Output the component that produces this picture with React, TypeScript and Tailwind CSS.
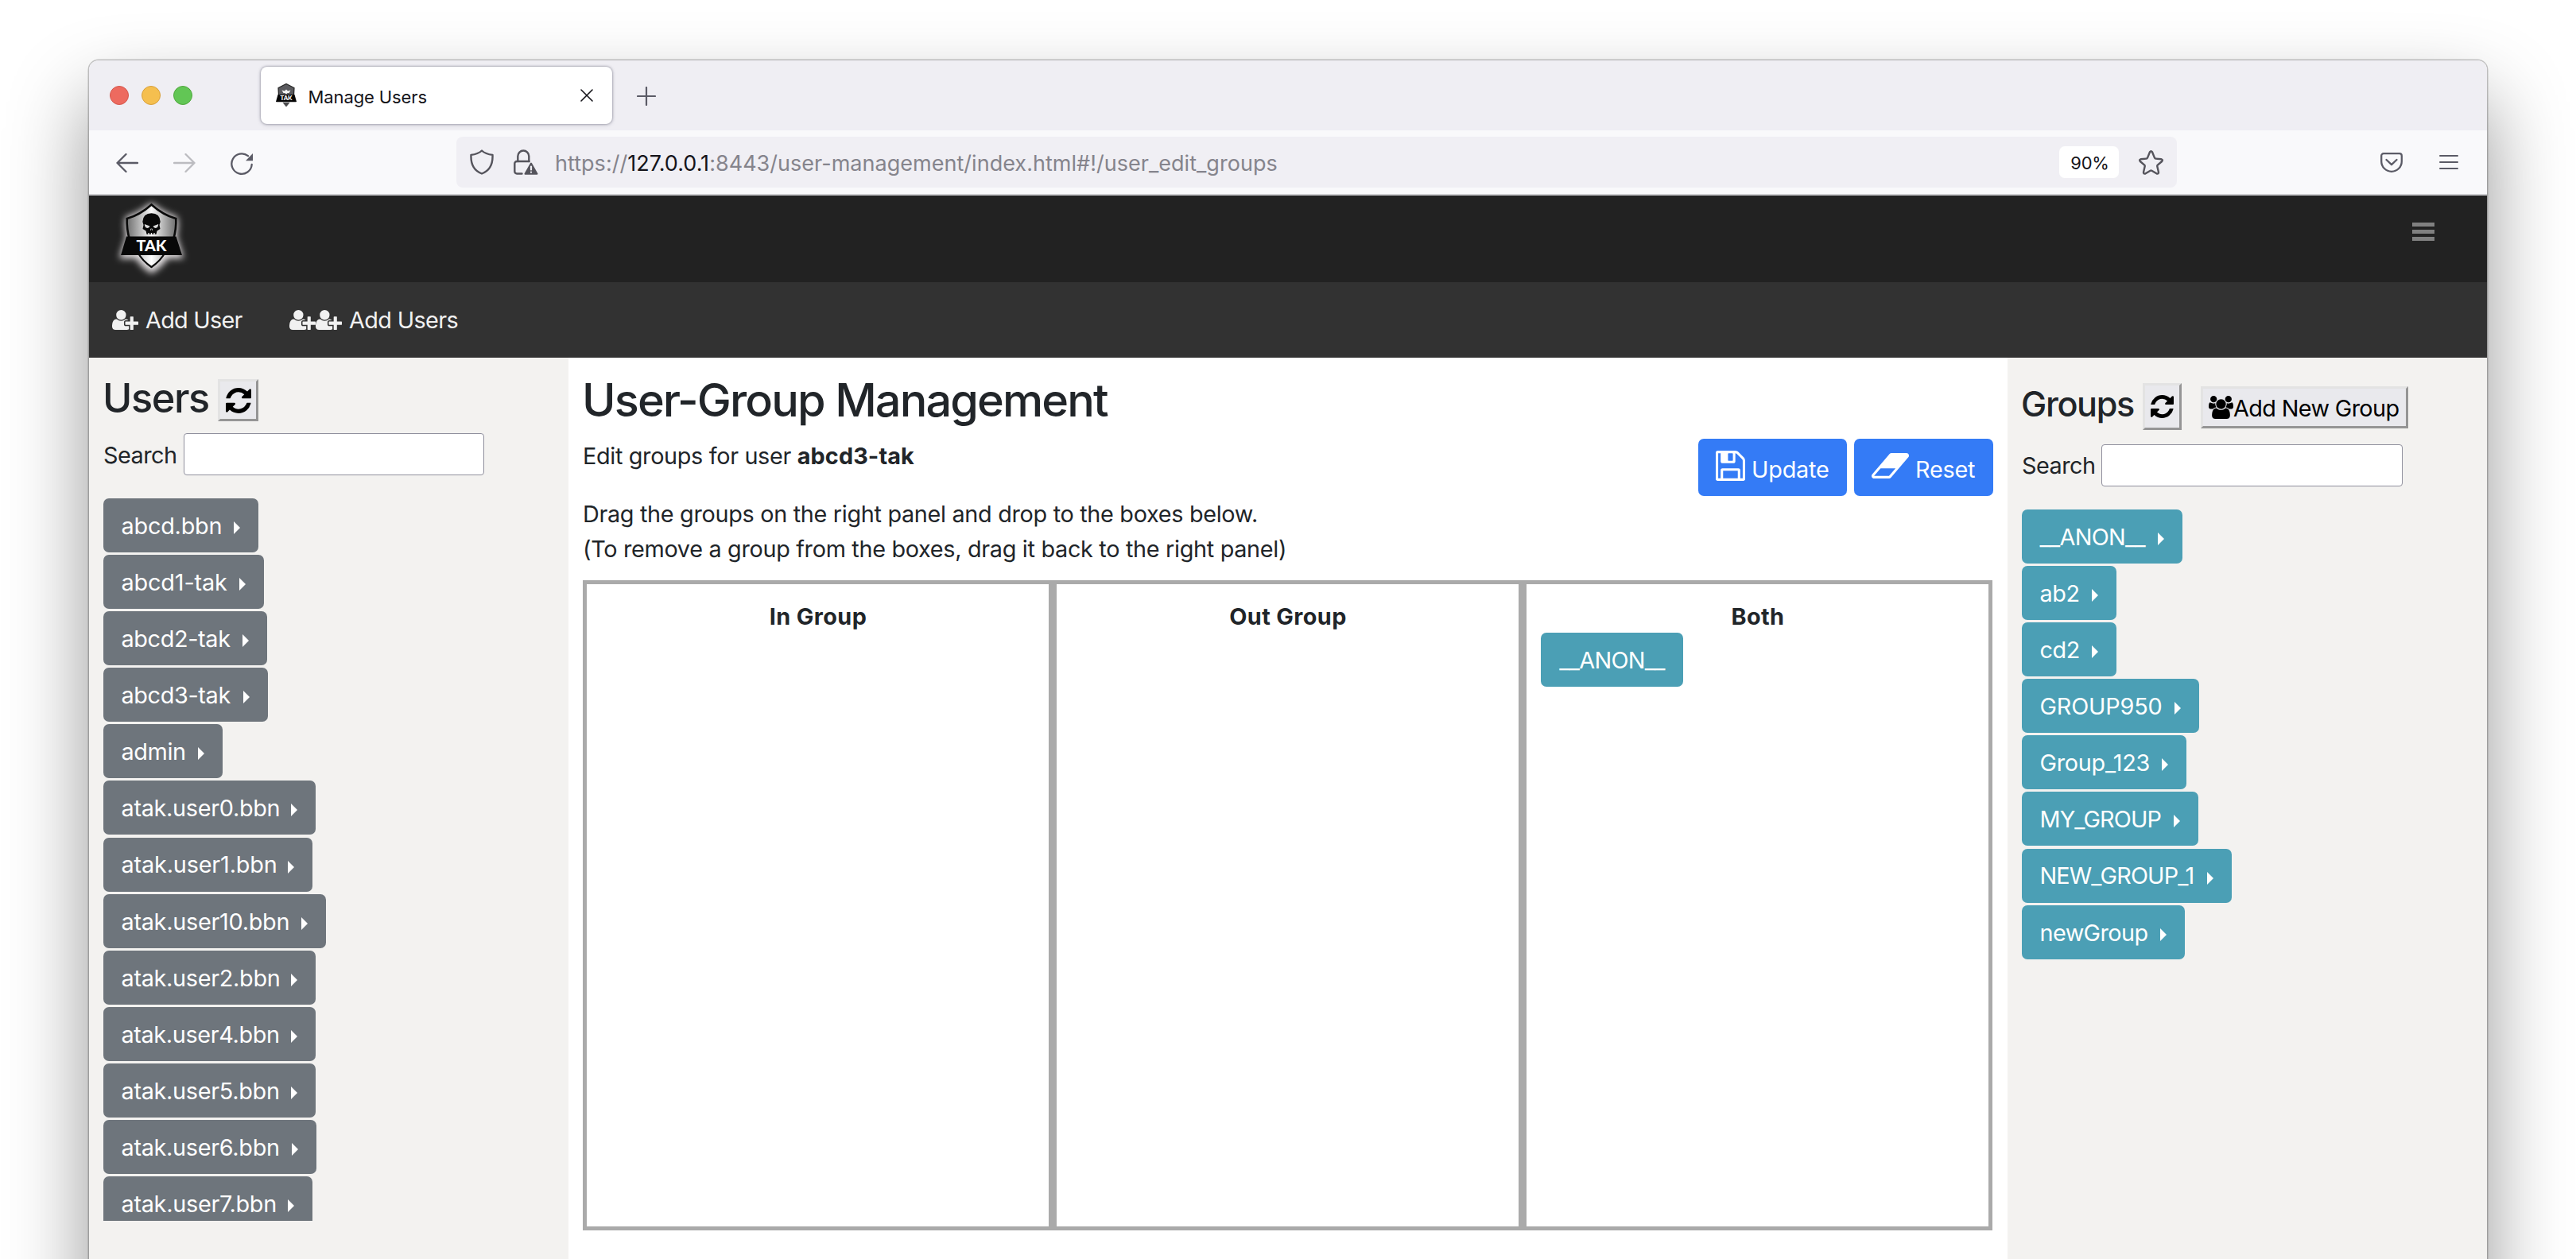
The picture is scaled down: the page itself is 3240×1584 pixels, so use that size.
import React from "react";

type Item = { name: string; box: string };

const users: Item[] = [
  { name: "abcd.bbn", box: "w-[195px] tracking-[-0.007em]" },
  { name: "abcd1-tak", box: "w-[202px] tracking-[-0.005em]" },
  { name: "abcd2-tak", box: "w-[206px] tracking-[-0.012em]" },
  { name: "abcd3-tak", box: "w-[207px] tracking-[-0.012em]" },
  { name: "admin", box: "w-[150px] tracking-[-0.012em]" },
  { name: "atak.user0.bbn", box: "w-[267px] tracking-[-0.01em]" },
  { name: "atak.user1.bbn", box: "w-[263px] tracking-[-0.005em]" },
  { name: "atak.user10.bbn", box: "w-[280px] tracking-[-0.009em]" },
  { name: "atak.user2.bbn", box: "w-[267px] tracking-[-0.01em]" },
  { name: "atak.user4.bbn", box: "w-[267px] tracking-[-0.012em]" },
  { name: "atak.user5.bbn", box: "w-[267px] tracking-[-0.01em]" },
  { name: "atak.user6.bbn", box: "w-[268px] tracking-[-0.01em]" },
  { name: "atak.user7.bbn", box: "w-[263px] tracking-[-0.009em]" },
];

const groups: Item[] = [
  { name: "__ANON__", box: "w-[202px] tracking-[-0.023em]" },
  { name: "ab2", box: "w-[119px] tracking-[-0.014em]" },
  { name: "cd2", box: "w-[119px] tracking-[-0.014em]" },
  { name: "GROUP950", box: "w-[223px] tracking-[-0.006em]" },
  { name: "Group_123", box: "w-[207px] tracking-[-0.009em]" },
  { name: "MY_GROUP", box: "w-[222px] tracking-[-0.03em]" },
  { name: "NEW_GROUP_1", box: "w-[264px] tracking-[-0.029em]" },
  { name: "newGroup", box: "w-[205px] tracking-[-0.02em]" },
];

function Glyph({ box, d, className }: { box: string; d: string; className: string }) {
  return (
    <svg viewBox={box} className={`shrink-0 ${className}`} fill="currentColor" preserveAspectRatio="none">
      <path d={d} />
    </svg>
  );
}

const Refresh = ({ className }: { className: string }) => (
  <Glyph
    box="128 128 1536 1536"
    className={className}
    d="M1639 1056q0 5-1 7-64 268-268 434.5t-478 166.5q-146 0-282.5-55t-243.5-157l-129 129q-19 19-45 19t-45-19-19-45v-448q0-26 19-45t45-19h448q26 0 45 19t19 45-19 45l-137 137q71 66 161 102t187 36q134 0 250-65t186-179q11-17 53-117 8-23 30-23h192q13 0 22.5 9.5t9.5 22.5zm25-800v448q0 26-19 45t-45 19h-448q-26 0-45-19t-19-45 19-45l138-138q-148-137-349-137-134 0-250 65t-186 179q-11 17-53 117-8 23-30 23h-199q-13 0-22.5-9.5t-9.5-22.5v-7q65-268 270-434.5t480-166.5q146 0 284 55.5t245 156.5l130-129q19-19 45-19t45 19 19 45z"
  />
);

const UserPlus = () => (
  <Glyph
    box="0 128 2048 1536"
    className="h-[25px] w-[33px]"
    d="M704 896q-159 0-271.5-112.5t-112.5-271.5 112.5-271.5 271.5-112.5 271.5 112.5 112.5 271.5-112.5 271.5-271.5 112.5zm960 128h352q13 0 22.5 9.5t9.5 22.5v192q0 13-9.5 22.5t-22.5 9.5h-352v352q0 13-9.5 22.5t-22.5 9.5h-192q-13 0-22.5-9.5t-9.5-22.5v-352h-352q-13 0-22.5-9.5t-9.5-22.5v-192q0-13 9.5-22.5t22.5-9.5h352v-352q0-13 9.5-22.5t22.5-9.5h192q13 0 22.5 9.5t9.5 22.5v352zm-736 224q0 52 38 90t90 38h256v238q-68 50-171 50h-874q-121 0-194-69t-73-190q0-53 3.5-103.5t14-109 26.5-108.5 43-97.5 62-81 85.5-53.5 111.5-20q19 0 39 17 79 61 154.5 91.5t164.5 30.5 164.5-30.5 154.5-91.5q20-17 39-17 132 0 217 96h-223q-52 0-90 38t-38 90v192z"
  />
);

const UsersGlyph = () => (
  <Glyph
    box="0 0 1920 1792"
    className="h-[29px] w-[31px]"
    d="M593 896q-162 5-265 128h-134q-82 0-138-40.5t-56-118.5q0-353 124-353 6 0 43.5 21t97.5 42.5 119 21.5q67 0 133-23-5 37-5 66 0 139 81 256zm1071 637q0 120-73 189.5t-194 69.5h-874q-121 0-194-69.5t-73-189.5q0-53 3.5-103.5t14-109 26.5-108.5 43-97.5 62-81 85.5-53.5 111.5-20q10 0 43 21.5t73 48 107 48 135 21.5 135-21.5 107-48 73-48 43-21.5q61 0 111.5 20t85.5 53.5 62 81 43 97.5 26.5 108.5 14 109 3.5 103.5zm-1024-1277q0 106-75 181t-181 75-181-75-75-181 75-181 181-75 181 75 75 181zm704 384q0 159-112.5 271.5t-271.5 112.5-271.5-112.5-112.5-271.5 112.5-271.5 271.5-112.5 271.5 112.5 112.5 271.5zm576 225q0 78-56 118.5t-138 40.5h-134q-103-123-265-128 81-117 81-256 0-29-5-66 66 23 133 23 59 0 119-21.5t97.5-42.5 43.5-21q124 0 124 353zm-128-609q0 106-75 181t-181 75-181-75-75-181 75-181 181-75 181 75 75 181z"
  />
);

const Floppy = () => (
  <Glyph
    box="128 128 1536 1536"
    className="h-[38px] w-[37px]"
    d="M512 1536h768v-384h-768v384zm896 0h128v-896q0-14-10-38.5t-20-34.5l-281-281q-10-10-34-20t-39-10v416q0 40-28 68t-68 28h-576q-40 0-68-28t-28-68v-416h-128v1280h128v-416q0-40 28-68t68-28h832q40 0 68 28t28 68v416zm-384-928v-320q0-13-9.5-22.5t-22.5-9.5h-192q-13 0-22.5 9.5t-9.5 22.5v320q0 13 9.5 22.5t22.5 9.5h192q13 0 22.5-9.5t9.5-22.5zm640 32v928q0 40-28 68t-68 28h-1344q-40 0-68-28t-28-68v-1344q0-40 28-68t68-28h928q40 0 88 20t76 48l280 280q28 28 48 76t20 88z"
  />
);

const Eraser = () => (
  <Glyph
    box="0 256 1920 1280"
    className="h-[32px] w-[47px]"
    d="M896 1408l336-384h-768l-336 384h768zm1013-1077q15 34 9.5 71.5t-30.5 65.5l-896 1024q-38 44-96 44h-768q-38 0-69.5-20.5t-47.5-54.5q-15-34-9.5-71.5t30.5-65.5l896-1024q38-44 96-44h768q38 0 69.5 20.5t47.5 54.5z"
  />
);

function Logo() {
  return (
    <svg viewBox="0 6 110 109" className="h-[109px] w-[110px] overflow-hidden">
      <defs>
        <linearGradient id="steel" x1="0" x2="1">
          <stop offset="0" stopColor="#6e6e6e" />
          <stop offset="0.5" stopColor="#f8f8f8" />
          <stop offset="1" stopColor="#6e6e6e" />
        </linearGradient>
        <linearGradient id="tip" x1="0" x2="1">
          <stop offset="0" stopColor="#c4c4c4" />
          <stop offset="0.5" stopColor="#ffffff" />
          <stop offset="1" stopColor="#b8b8b8" />
        </linearGradient>
        <filter id="halo" x="-30%" y="-30%" width="160%" height="160%">
          <feGaussianBlur stdDeviation="4.2" />
        </filter>
      </defs>
      <g filter="url(#halo)" fill="#e8e4e6">
        <path d="M60.5 15 Q76 28 93 33 Q95 46 92 57 L101 85 H81 Q73 97 60.5 104 Q48 97 41 85 H20 L29 57 Q26 46 28 33 Q45 28 60.5 15Z" />
      </g>
      <path d="M60.5 17.5 Q75 30.500 91.300 35 Q92 47 88 62 H33 Q29 47 29.700 35 Q46 30.500 60.500 17.500Z" fill="url(#steel)" stroke="#0a0a0a" strokeWidth="2.600" />
      <path d="M43.500 78 Q49 88 60.500 96 Q72 88 77.500 78Z" fill="url(#tip)" stroke="#0a0a0a" strokeWidth="2.200" />
      <path d="M29 57.500 H91.500 L99 81 H22Z" fill="#080808" />
      <path d="M49.300 39 Q50 28.300 60.500 28.300 Q71 28.300 71.700 39 L70.500 43 L71.500 48 L67.500 50.500 L66.500 54.800 H64.700 V53 H63.300 V54.800 H61.200 V53 H59.800 V54.800 H57.700 V53 H56.300 V54.800 H54.500 L53.500 50.500 L49.500 48 L50.500 43Z" fill="#080808" />
      <path d="M51.800 42 L58.500 44.500 Q57.500 47.500 54.500 46.800 Q52 46 51.800 42Z M69.200 42 L62.500 44.500 Q63.500 47.500 66.500 46.800 Q69 46 69.200 42Z" fill="#d8d8d8" />
      <path d="M59.300 49.800 L60 47.600 M61.700 49.800 L61 47.600" stroke="#e8e8e8" strokeWidth="0.900" />
      <text x="41.500" y="75.800" textLength="38" lengthAdjust="spacingAndGlyphs" fontFamily="Lato, sans-serif" fontWeight="900" fontSize="19.500" fill="#ffffff">
        TAK
      </text>
    </svg>
  );
}

function Favicon() {
  return (
    <svg viewBox="0 0 26 30" className="h-[30px] w-[26px] shrink-0">
      <path d="M13 0.500 L23 5.500 L22.500 15 H3.500 L3 5.500Z" fill="#5a5a5e" stroke="#222" strokeWidth="1.200" />
      <path d="M7.500 8.500 L11 9.500 L13 7.500 L15 9.500 L18.500 8.500 L16.500 12 H14.500 L13 13.500 L11.500 12 H9.500Z" fill="#f4f4f4" />
      <path d="M6 21 H20 L13 29.500Z" fill="#4a4a4c" />
      <path d="M0.500 22.500 H25.500 V24 H0.500Z" fill="#bdbdbd" />
      <path d="M2.500 14 H23.500 L26 23 H0Z" fill="#050505" />
      <text x="5.500" y="21.300" textLength="15" lengthAdjust="spacingAndGlyphs" fontFamily="Lato, sans-serif" fontWeight="900" fontSize="7.500" fill="#ffffff">
        TAK
      </text>
    </svg>
  );
}

function Entry({ item, tone }: { item: Item; tone: string }) {
  return (
    <li className={`mb-[3.1px] flex h-[68px] items-center justify-between rounded-[7px] pr-[23px] pl-[22.5px] text-white ${tone} ${item.box}`}>
      <span className="pt-px whitespace-nowrap">{item.name}</span>
      <svg viewBox="0 0 8 16" className="mt-[6px] h-[16px] w-[8px] shrink-0">
        <path d="M0 0 L8 8 L0 16Z" fill="#fff" />
      </svg>
    </li>
  );
}

const raised =
  "flex shrink-0 items-center border-[3px] border-t-[#e3e3e3] border-r-[#959595] border-b-[#959595] border-l-[#e3e3e3] bg-[#e9e9ed] text-black";

function TabStrip() {
  return (
    <div className="flex h-[88px] items-start rounded-t-[12px] bg-[#efeef3]">
      <div className="mt-[32px] ml-[26px] flex gap-4">
        <span className="size-6 rounded-full border border-[#d5574c] bg-[#ed6a5f]" />
        <span className="size-6 rounded-full border border-[#d8a03c] bg-[#f5bf4f]" />
        <span className="size-6 rounded-full border border-[#50a73d] bg-[#62c655]" />
      </div>
      <div className="mt-2 ml-[86px] flex h-[72px] w-[442px] items-center rounded-[8px] bg-white pr-6 pl-[19px] shadow-[0_0_3px_rgba(90,90,110,0.7),0_1px_5px_rgba(90,90,110,0.25)]">
        <Favicon />
        <span className="ml-[14.500px] pt-[5px] text-[22px] tracking-[-0.005em] text-[#15141a]">Manage Users</span>
        <svg viewBox="0 0 16 16" className="ml-auto size-4" stroke="#15141a" strokeWidth="1.600" strokeLinecap="round">
          <path d="M1 1 L15 15 M15 1 L1 15" />
        </svg>
      </div>
      <svg viewBox="0 0 24 24" className="mt-[33px] ml-[31px] size-6" stroke="#5b5b66" strokeWidth="2.200" strokeLinecap="round">
        <path d="M12 1 V23 M1 12 H23" />
      </svg>
    </div>
  );
}

function AddressBar() {
  return (
    <div className="flex h-[82px] items-center border-b-2 border-[#cccccf] bg-[#f9f9fb] text-[#5b5b66]">
      <svg viewBox="0 0 28 24" className="mt-[2px] ml-[34px] h-6 w-7" fill="none" stroke="currentColor" strokeWidth="2.300" strokeLinecap="round" strokeLinejoin="round">
        <path d="M1.500 12 H27 M12.500 1 L1.500 12 L12.500 23" />
      </svg>
      <svg viewBox="0 0 28 24" className="mt-[2px] ml-[44px] h-6 w-7" fill="none" stroke="#bcbcc0" strokeWidth="2.300" strokeLinecap="round" strokeLinejoin="round">
        <path d="M1 12 H26.500 M15.500 1 L26.500 12 L15.500 23" />
      </svg>
      <svg viewBox="0 0 28 28" className="mt-[3px] ml-[44px] size-7" fill="none" stroke="currentColor" strokeWidth="2.300" strokeLinecap="round">
        <path d="M26.700 15 A12.700 12.700 0 1 1 22 4.200" />
        <path d="M28 1 V10.300 H19Z" fill="currentColor" stroke="none" />
      </svg>
      <div className="ml-[256px] flex h-16 w-[2164px] items-center rounded-[8px] bg-[#f0eff4]">
        <svg viewBox="0 0 30 32" className="ml-[17px] h-8 w-[30px]" fill="none" stroke="#55545c" strokeWidth="2.400" strokeLinejoin="round">
          <path d="M15 1.500 C18.500 4.800 23 6.300 28.500 6.900 C29 17 25.500 26.500 15 30.500 C4.500 26.500 1 17 1.500 6.900 C7 6.300 11.500 4.800 15 1.500Z" />
        </svg>
        <svg viewBox="0 0 31 32" className="ml-[25px] h-8 w-[31px]" fill="none" stroke="#55545c" strokeWidth="2.400" strokeLinecap="round">
          <path d="M5.300 15 V8.500 A7 7 0 0 1 19.300 8.500 V15" />
          <path d="M10.500 30.500 H4 A2.700 2.700 0 0 1 1.300 27.800 V17.700 A2.700 2.700 0 0 1 4 15 H19.500" />
          <path d="M22 17.500 L29.500 30.700 H14.500Z" fill="#55545c" strokeWidth="2" strokeLinejoin="round" />
          <path d="M22 21.500 V25.500 M22 28.600 V28.700" stroke="#f0eff4" strokeWidth="2.200" />
        </svg>
        <span className="ml-[21px] pt-[3px] text-[27px] tracking-[0.001em] whitespace-nowrap text-[#85848c]">
          https://<span className="text-[#15141a]">127.0.0.1</span>:8443/user-management/index.html#!/user_edit_groups
        </span>
        <span className="mr-[25px] ml-auto flex h-10 w-[75px] items-center justify-center rounded-[7px] bg-white pt-[3px] pl-[2px] text-[22px] tracking-[-0.012em] text-[#15141a]">
          90%
        </span>
        <svg viewBox="0 0 31 31" className="mr-[17px] size-[31px]" fill="none" stroke="#55545c" strokeWidth="2.400" strokeLinejoin="round">
          <path d="M14 2.300 Q15.500 0.200 17 2.300 L20 9.600 Q20.400 10.500 21.400 10.600 L28.500 11.300 Q30.800 12 29.200 14 L23.800 18.700 Q23.100 19.400 23.300 20.300 L25 27.800 Q25 30.200 22.800 29.500 L16.400 25.700 Q15.500 25.200 14.600 25.700 L8.200 29.500 Q6 30.200 6 27.800 L7.700 20.300 Q7.900 19.400 7.200 18.700 L1.800 14 Q0.200 12 2.500 11.300 L9.600 10.600 Q10.600 10.500 11 9.600Z" />
        </svg>
      </div>
      <svg viewBox="0 0 28 25" className="ml-[256px] h-[25px] w-[28px]" fill="none" stroke="currentColor" strokeWidth="2.300" strokeLinecap="round" strokeLinejoin="round">
        <path d="M4 1.200 H24 A2.800 2.800 0 0 1 26.800 4 V11 A12.800 12.800 0 0 1 1.200 11 V4 A2.800 2.800 0 0 1 4 1.200Z" />
        <path d="M7.500 9 L14 15.200 L20.500 9" />
      </svg>
      <div className="ml-[46px] flex w-6 flex-col gap-[5.500px]">
        <span className="h-[2.500px] rounded-full bg-[#5b5b66]" />
        <span className="h-[2.500px] rounded-full bg-[#5b5b66]" />
        <span className="h-[2.500px] rounded-full bg-[#5b5b66]" />
      </div>
    </div>
  );
}

function UsersPanel() {
  return (
    <aside className="w-[603px] shrink-0 bg-[#f3f2f0] pl-[18px]">
      <div className="flex h-[95px] items-start pt-5">
        <h3 className="-ml-[1px] w-[145px] text-[50.400px] leading-[61px] font-medium tracking-[-0.027em]">Users</h3>
        <button className={`${raised} mt-[7px] h-[53px] w-[51px] justify-center`}>
          <Refresh className="h-[32px] w-[32px]" />
        </button>
      </div>
      <div className="flex h-[53px] items-center">
        <label className="w-[101px] pt-[3px] tracking-[-0.018em]">Search</label>
        <input className="h-[53px] w-[378px] rounded-[4px] border border-[#8f8f9d] bg-white" />
      </div>
      <ul className="mt-[29px] h-[909px] overflow-hidden">
        {users.map((u) => (
          <Entry key={u.name} item={u} tone="bg-[#6e757c]" />
        ))}
      </ul>
    </aside>
  );
}

function GroupsPanel() {
  return (
    <aside className="flex-1 bg-[#f3f2f0] pl-[18px]">
      <div className="flex h-[109px] items-start pt-[29px]">
        <h4 className="-ml-[1px] w-[153px] text-[43.200px] leading-[59px] font-medium tracking-[-0.032em]">Groups</h4>
        <button className={`${raised} mt-[3px] h-[59px] w-[49px] justify-center`}>
          <Refresh className="size-[29px]" />
        </button>
        <button className={`${raised} mt-[7px] ml-6 h-[53px] w-[261px] pl-[7px]`}>
          <UsersGlyph />
          <span className="pt-[3px] tracking-[-0.022em] whitespace-nowrap">Add New Group</span>
        </button>
      </div>
      <div className="flex h-[53px] items-center">
        <label className="w-[100px] pt-px tracking-[-0.018em]">Search</label>
        <input className="h-[53px] w-[379px] rounded-[4px] border border-[#8f8f9d] bg-white" />
      </div>
      <ul className="mt-[29px]">
        {groups.map((g) => (
          <Entry key={g.name} item={g} tone="bg-[#4b9fb5]" />
        ))}
      </ul>
    </aside>
  );
}

const column = "border-[5px] border-[#aaaaaa] pt-5";
const columnTitle = "pl-px text-center leading-[41px] font-bold tracking-[0.014em]";

function Workspace() {
  return (
    <main className="w-[1810px] shrink-0 bg-white pt-[18px] pr-[18px] pl-[18px]">
      <h2 className="-ml-[1px] text-[57.600px] leading-[71px] font-medium tracking-[-0.0326em]">User-Group Management</h2>
      <div className="mt-[13px] flex h-[73px] items-start justify-between">
        <p className="leading-[44px] tracking-[-0.0115em]">
          Edit groups for user <b className="tracking-[0.004em]">abcd3-tak</b>
        </p>
        <div className="flex gap-[9px] text-white">
          <button className="flex h-[72px] w-[187px] items-center rounded-[7px] bg-[#347bf6] pb-[4px] pl-[22px]">
            <Floppy />
            <span className="ml-[8px] pt-[9px] tracking-[-0.007em]">Update</span>
          </button>
          <button className="flex h-[72px] w-[175px] items-center rounded-[7px] bg-[#347bf6] pb-[4px] pl-[22px]">
            <Eraser />
            <span className="ml-[8px] pt-[9px] tracking-[-0.008em]">Reset</span>
          </button>
        </div>
      </div>
      <p className="leading-[43.500px] tracking-[-0.0107em]">
        Drag the groups on the right panel and drop to the boxes below.
        <br />
        (To remove a group from the boxes, drag it back to the right panel)
      </p>
      <div className="mt-[18px] grid h-[818px] w-[1773px] grid-cols-3">
        <section className={column}>
          <h5 className={columnTitle}>In Group</h5>
        </section>
        <section className={column}>
          <h5 className={columnTitle}>Out Group</h5>
        </section>
        <section className={column}>
          <h5 className={columnTitle}>Both</h5>
          <div className="ml-[18px] flex h-[68px] w-[179px] items-center justify-center rounded-[7px] bg-[#4b9fb5] pt-px tracking-[-0.023em] text-white">
            __ANON__
          </div>
        </section>
      </div>
    </main>
  );
}

export default function App() {
  return (
    <div className="h-[1584px] w-[3240px] overflow-hidden bg-white pt-[76px] font-['Inter',sans-serif] text-[28.800px] leading-[43.200px] text-[#212529]">
      <div className="ml-[112px] h-[1800px] w-[3016px] rounded-[12px] bg-white shadow-[0_0_0_1.500px_rgba(0,0,0,0.22),0_50px_100px_rgba(0,0,0,0.42)]">
        <TabStrip />
        <AddressBar />
        <header className="flex h-[109px] items-start justify-between bg-[#222222] pr-[66px] pl-[18px]">
          <Logo />
          <div className="mt-[34px] flex w-7 flex-col gap-[4.500px]">
            <span className="h-[4.700px] bg-[#808080]" />
            <span className="h-[4.700px] bg-[#808080]" />
            <span className="h-[4.700px] bg-[#808080]" />
          </div>
        </header>
        <nav className="flex h-[95px] items-center bg-[#323232] pl-[29px] text-[#f1f1f1]">
          <a className="flex items-center">
            <UserPlus />
            <span className="ml-[9px] w-[181px] pt-px tracking-[-0.025em]">Add User</span>
          </a>
          <a className="flex items-center">
            <UserPlus />
            <UserPlus />
            <span className="ml-[9px] pt-px tracking-[-0.022em]">Add Users</span>
          </a>
        </nav>
        <div className="flex h-[1350px]">
          <UsersPanel />
          <Workspace />
          <GroupsPanel />
        </div>
      </div>
    </div>
  );
}
